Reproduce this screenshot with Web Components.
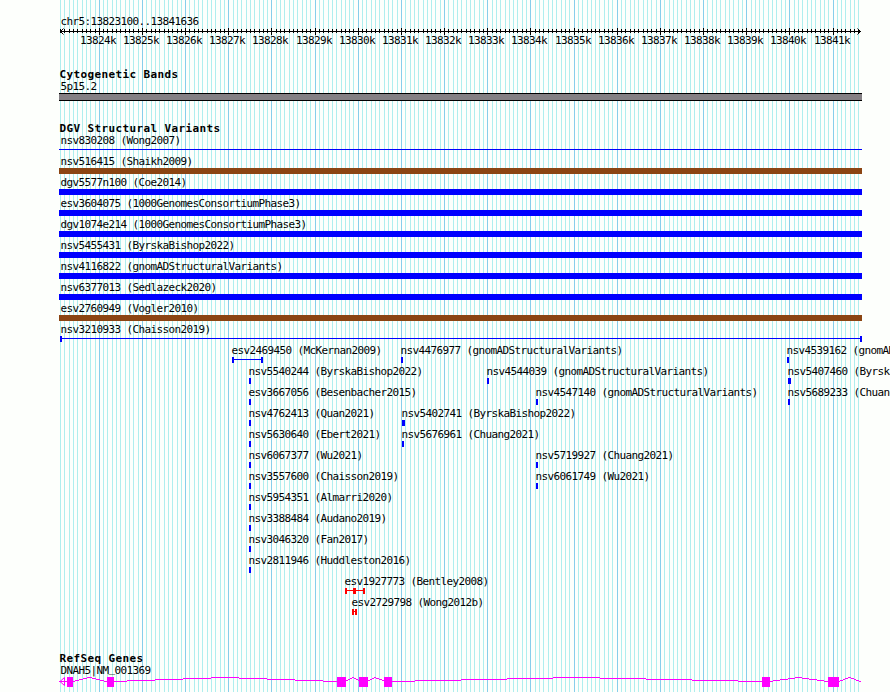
<!DOCTYPE html>
<html lang="en">
<head>
<meta charset="utf-8">
<title>chr5:13823100..13841636</title>
<style>
body { margin: 0; background: #fdfffc; overflow: hidden; }
</style>
</head>
<body>
<genome-browser></genome-browser>
<script>
const START = 13823100;
const END = 13841636;
const LEFT = 60;
const SCALE = 800 / (END - START);
const bpToX = (bp) => Math.round(LEFT + (bp - START) * SCALE);

// positions of every 100 bp, flagged when they are a full kilobase
function gridSteps() {
    const steps = [];
    for (let bp = START; bp <= END; bp += 100) {
        steps.push({ x: bpToX(bp), major: bp % 1000 === 0, bp });
    }
    return steps;
}

const TEXT_CSS = `
    .label {
        font: 11px/13px "DejaVu Sans Mono", monospace;
        letter-spacing: -0.622px;
        text-indent: 0.5px;
        white-space: pre;
        color: #000;
    }
`;

class GridLines extends HTMLElement {
    connectedCallback() {
        this.attachShadow({ mode: 'open' });
        const lines = gridSteps().map(s =>
            `<rect x="${s.x}" y="0" width="1" height="692" fill="${s.major ? '#87ceeb' : '#afeeee'}"/>`);
        this.shadowRoot.innerHTML = `
            <style>
                :host { position: absolute; top: 0; left: 0; }
                svg { display: block; }
            </style>
            <svg width="890" height="692" shape-rendering="crispEdges">${lines.join('')}</svg>
        `;
    }
}
customElements.define('grid-lines', GridLines);

class ScaleRuler extends HTMLElement {
    connectedCallback() {
        this.attachShadow({ mode: 'open' });
        const steps = gridSteps();
        const ticks = steps.map(s => s.major
            ? `<rect x="${s.x}" y="0" width="1" height="7"/>`
            : `<rect x="${s.x}" y="1" width="1" height="4"/>`);
        const labels = steps.filter(s => s.major).map(s =>
            `<text x="${s.x - 19}" y="16">${s.bp / 1000}k</text>`);
        this.shadowRoot.innerHTML = `
            <style>
                :host { display: block; padding-top: 15px; height: 53px; }
                .label { padding-left: 60px; }
                svg { display: block; }
                text { font: 11px "DejaVu Sans Mono", monospace; letter-spacing: -0.622px; }
                ${TEXT_CSS}
            </style>
            <div class="label">${this.getAttribute('region')}</div>
            <svg width="890" height="24">
                <g shape-rendering="crispEdges">
                    <rect x="60" y="3" width="801" height="1"/>
                    ${ticks.join('')}
                </g>
                <path d="M63.5 0.5L60.5 3.5L63.5 6.5M857.5 0.5L860.5 3.5L857.5 6.5" fill="none" stroke="#000"/>
                ${labels.join('')}
            </svg>
        `;
    }
}
customElements.define('scale-ruler', ScaleRuler);

class TrackSection extends HTMLElement {
    connectedCallback() {
        this.attachShadow({ mode: 'open' });
        this.shadowRoot.innerHTML = `
            <style>
                :host { display: block; }
                h2 {
                    margin: 0;
                    padding: 1px 0 0 59px;
                    height: 11px;
                    font: bold 11px/12px "DejaVu Sans Mono", monospace;
                    letter-spacing: 0.378px;
                    text-indent: 0.5px;
                }
            </style>
            <h2>${this.getAttribute('heading')}</h2>
            <slot></slot>
        `;
    }
}
customElements.define('track-section', TrackSection);

// One 21px lane; items is a list of { x, name, shape }
class FeatureLane extends HTMLElement {
    set items(list) {
        if (!this.shadowRoot) this.attachShadow({ mode: 'open' });
        const cells = list.map((item, i) => {
            const next = list[i + 1] ? list[i + 1].x : 890;
            const gap = i === 0 ? item.x : 0;
            return `<div class="cell" style="margin-left:${gap}px;width:${next - item.x}px">
                <div class="label">${item.name}</div>
                <svg width="830" height="8" shape-rendering="crispEdges">${item.shape}</svg>
            </div>`;
        });
        this.shadowRoot.innerHTML = `
            <style>
                :host { display: flex; height: 21px; }
                .cell { flex: none; height: 21px; }
                .cell svg { display: block; overflow: visible; margin-left: -1px; }
                ${TEXT_CSS}
            </style>
            ${cells.join('')}
        `;
    }
}
customElements.define('feature-lane', FeatureLane);

class GeneModel extends HTMLElement {
    connectedCallback() {
        this.attachShadow({ mode: 'open' });
        const exons = [[67, 6], [107, 7], [337, 9], [359, 9], [384, 8], [762, 8], [828, 11]];
        // each intron is a stepped hat line: [x, y] of every run
        const introns = [
            [[73, 4], [75, 3], [79, 2], [83, 1], [87, 0], [92, 1], [96, 2], [100, 3], [104, 4]],
            [[114, 4], [127, 3], [155, 2], [183, 1], [211, 0], [239, 1], [267, 2], [295, 3], [323, 4]],
            [[346, 3], [348, 2], [350, 1], [352, 0], [354, 1], [356, 2], [358, 3]],
            [[368, 3], [370, 2], [372, 1], [374, 0], [376, 1], [379, 2], [382, 3]],
            [[392, 4], [415, 3], [461, 2], [507, 1], [553, 0], [600, 1], [646, 2], [692, 3], [738, 4]],
            [[770, 4], [773, 3], [780, 2], [788, 1], [795, 0], [802, 1], [809, 2], [817, 3], [824, 4]],
            [[839, 4], [840, 3], [843, 2], [845, 1], [848, 0], [851, 1], [854, 2], [856, 3], [859, 4]]
        ];
        const stops = [107, 337, 359, 384, 762, 828, 861];
        const steps = introns.map((line, n) => line.map(([x, y], i) => {
            const end = i + 1 < line.length ? line[i + 1][0] : stops[n];
            return `<rect x="${x}" y="${y}" width="${end - x}" height="1"/>`;
        }).join(''));
        const name = this.getAttribute('name').replace('_', '<span>_</span>');
        this.shadowRoot.innerHTML = `
            <style>
                :host { display: block; }
                .label { padding-left: 60px; }
                .label span { position: relative; top: -2px; }
                svg { display: block; }
                ${TEXT_CSS}
            </style>
            <div class="label">${name}</div>
            <svg width="890" height="15">
                <g fill="#f0f" shape-rendering="crispEdges">
                    <rect x="59" y="4" width="8" height="1"/>
                    ${exons.map(([x, w]) => `<rect x="${x}" y="0" width="${w}" height="10"/>`).join('')}
                    ${steps.join('')}
                </g>
                <path d="M64.5 0.5L60 4.5L64.5 8.5Z" fill="none" stroke="#f0f"/>
            </svg>
        `;
    }
}
customElements.define('gene-model', GeneModel);

const rect = (x, y, w, h, fill) => `<rect x="${x}" y="${y}" width="${w}" height="${h}" fill="${fill}"/>`;
const bar = (fill) => rect(0, 0, 803, 6, fill);
// small tick under a label
const mark = (dx = 1, w = 2, fill = '#00f') => rect(dx, 0, w, 6, fill);

const LANES = [
    [[60, 'nsv830208 (Wong2007)', rect(0, 2, 803, 1, '#00f')]],
    [[60, 'nsv516415 (Shaikh2009)', bar('#8b4513')]],
    [[60, 'dgv5577n100 (Coe2014)', bar('#00f')]],
    [[60, 'esv3604075 (1000GenomesConsortiumPhase3)', bar('#00f')]],
    [[60, 'dgv1074e214 (1000GenomesConsortiumPhase3)', bar('#00f')]],
    [[60, 'nsv5455431 (ByrskaBishop2022)', bar('#00f')]],
    [[60, 'nsv4116822 (gnomADStructuralVariants)', bar('#00f')]],
    [[60, 'nsv6377013 (Sedlazeck2020)', bar('#00f')]],
    [[60, 'esv2760949 (Vogler2010)', bar('#8b4513')]],
    [[60, 'nsv3210933 (Chaisson2019)', rect(1, 2, 801, 1, '#00f') + mark() + mark(801)]],
    [[231, 'esv2469450 (McKernan2009)', rect(2, 2, 30, 1, '#00f') + mark(2) + mark(31)],
     [400, 'nsv4476977 (gnomADStructuralVariants)', mark(2)],
     [786, 'nsv4539162 (gnomADStructuralVariants)', mark(2)]],
    [[248, 'nsv5540244 (ByrskaBishop2022)', mark(2)],
     [486, 'nsv4544039 (gnomADStructuralVariants)', mark(2)],
     [787, 'nsv5407460 (ByrskaBishop2022)', mark(2, 3)]],
    [[248, 'esv3667056 (Besenbacher2015)', mark(2)],
     [535, 'nsv4547140 (gnomADStructuralVariants)', mark(2)],
     [787, 'nsv5689233 (Chuang2021)', mark(2)]],
    [[248, 'nsv4762413 (Quan2021)', mark(2)],
     [401, 'nsv5402741 (ByrskaBishop2022)', mark(2, 3)]],
    [[248, 'nsv5630640 (Ebert2021)', mark(2)],
     [401, 'nsv5676961 (Chuang2021)', mark(2)]],
    [[248, 'nsv6067377 (Wu2021)', mark(2)],
     [535, 'nsv5719927 (Chuang2021)', mark(2)]],
    [[248, 'nsv3557600 (Chaisson2019)', mark(2)],
     [535, 'nsv6061749 (Wu2021)', mark(2)]],
    [[248, 'nsv5954351 (Almarri2020)', mark(2)]],
    [[248, 'nsv3388484 (Audano2019)', mark(2)]],
    [[248, 'nsv3046320 (Fan2017)', mark(2)]],
    [[248, 'nsv2811946 (Huddleston2016)', mark(2)]],
    [[344, 'esv1927773 (Bentley2008)',
        rect(2, 2, 20, 1, 'red') + mark(2, 2, 'red') + mark(10, 3, 'red') + mark(20, 2, 'red')]],
    [[351, 'esv2729798 (Wong2012b)',
        rect(2, 2, 4, 1, 'red') + mark(2, 2, 'red') + mark(5, 2, 'red')]]
];

class GenomeBrowser extends HTMLElement {
    connectedCallback() {
        this.attachShadow({ mode: 'open' });
        this.shadowRoot.innerHTML = `
            <style>
                :host { display: block; position: relative; width: 890px; height: 692px; overflow: hidden; }
                main { position: relative; display: flex; flex-direction: column; }
                .cyto { height: 54px; }
                .dgv { height: 530px; }
                .band {
                    box-sizing: border-box;
                    width: 803px;
                    height: 8px;
                    margin-left: 59px;
                    background: #848084;
                    border: solid #000;
                    border-width: 1px 0;
                }
                ${TEXT_CSS}
                .cyto .label { padding-left: 60px; }
            </style>
            <grid-lines></grid-lines>
            <main>
                <scale-ruler region="chr5:13823100..13841636"></scale-ruler>
                <track-section class="cyto" heading="Cytogenetic Bands">
                    <div class="label">5p15.2</div>
                    <div class="band"></div>
                </track-section>
                <track-section class="dgv" heading="DGV Structural Variants"></track-section>
                <track-section heading="RefSeq Genes">
                    <gene-model name="DNAH5|NM_001369"></gene-model>
                </track-section>
            </main>
        `;
        const dgv = this.shadowRoot.querySelector('.dgv');
        LANES.forEach(lane => {
            const el = document.createElement('feature-lane');
            el.items = lane.map(([x, name, shape]) => ({ x, name, shape }));
            dgv.appendChild(el);
        });
    }
}
customElements.define('genome-browser', GenomeBrowser);
</script>
</body>
</html>
